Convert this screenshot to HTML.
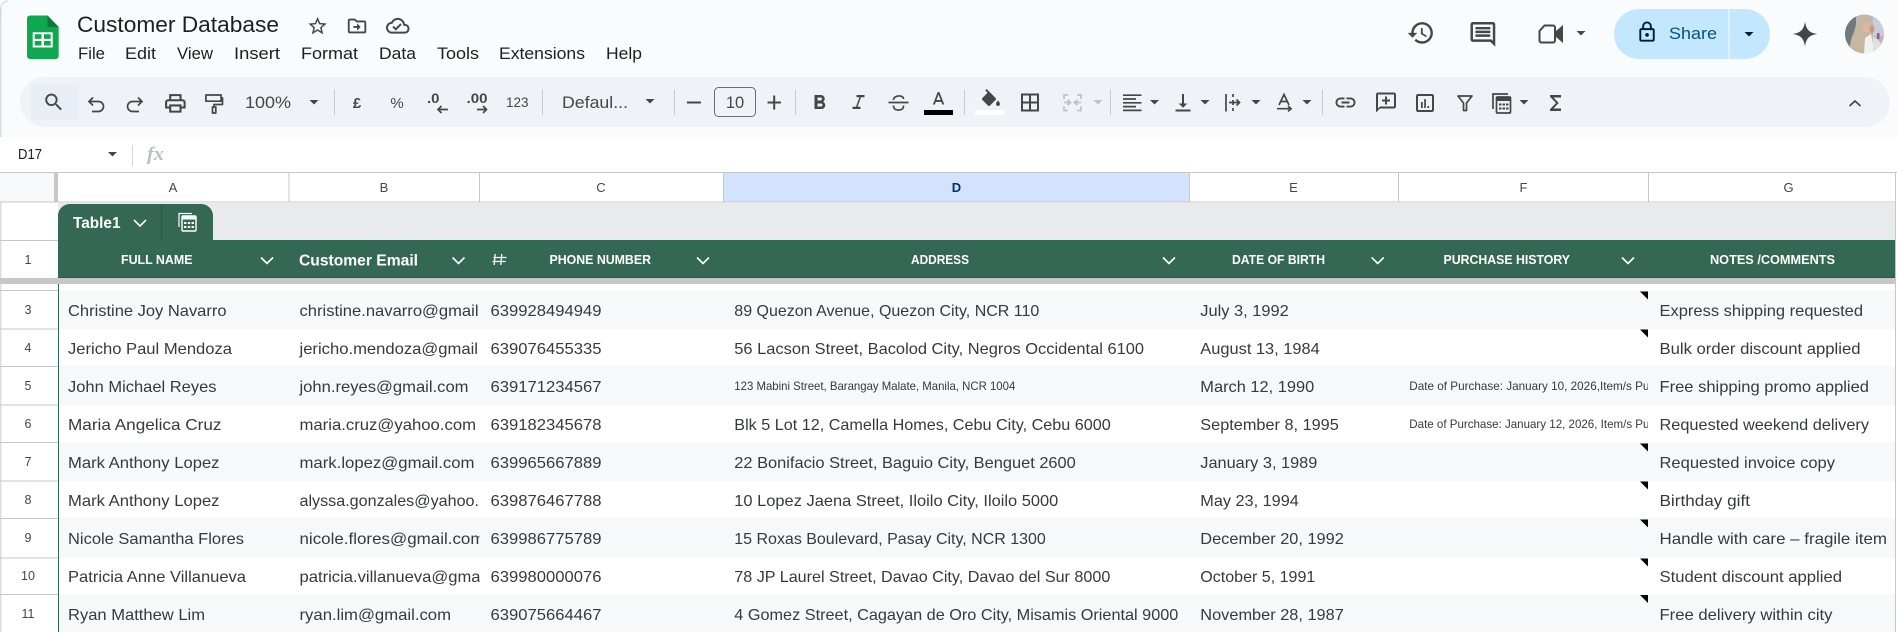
<!DOCTYPE html>
<html><head><meta charset="utf-8"><title>Customer Database</title>
<style>
html,body{margin:0;padding:0;background:#fff;width:1897px;height:632px;overflow:hidden}
svg{display:block}
text{font-family:"Liberation Sans",sans-serif;white-space:pre}
.c{font-size:16px;fill:#37393c}
.s{font-size:12px;fill:#37393c}
.r{font-size:12.5px;fill:#444746;text-anchor:middle}
.h{font-size:13px;fill:#444746;text-anchor:middle}
.w{font-size:12.5px;font-weight:bold;fill:#fff}
.m{font-size:17px;fill:#1f1f1f}
.t{fill:#444746}
.i{fill:#444746}
.l{fill:none;stroke:#444746;stroke-width:1.700}
.ch{fill:none;stroke:#fff;stroke-width:1.600}
</style></head><body>
<svg xmlns="http://www.w3.org/2000/svg" width="1897" height="632" viewBox="0 0 1897 632">
<defs>
<clipPath id="cb"><rect x="289" y="284" width="190.500" height="348"/></clipPath>
<clipPath id="cf"><rect x="1399" y="284" width="249" height="348"/></clipPath>
<clipPath id="av"><circle cx="1864.500" cy="34" r="19.500"/></clipPath>
<path id="dd" d="M-4.500-2h9L0 2.500z"/>
</defs>

<!-- chrome -->
<rect width="1897" height="137" fill="#f9fbfd"/>
<path d="M.7 20V9A8 8 0 0 1 8 1" fill="none" stroke="#d9d9d9" stroke-width="1.200"/>
<rect x=".2" y="9" width="1.200" height="623" fill="#d5d5d5"/>
<rect x="0" y="137" width="1897" height="35" fill="#fff"/>
<rect x="20" y="77" width="1870" height="50" rx="25" fill="#eff3f8"/>
<rect x="31" y="85" width="47" height="35" fill="#e8edf6"/>

<!-- logo -->
<path d="M30 15.500H47.500L58.700 27V56A3 3 0 0 1 55.700 59H30A3 3 0 0 1 27 56V18.500A3 3 0 0 1 30 15.500z" fill="#0fa750"/>
<path d="M47.500 15.500L58.700 27H47.500z" fill="#0a7a3a"/>
<rect x="32.700" y="32.300" width="20" height="15.200" fill="#fff"/>
<path d="M34.700 34.300h6.800v4.600h-6.800zM43.900 34.300h6.800v4.600h-6.800zM34.700 41h6.800v4.500h-6.800zM43.900 41h6.800v4.500h-6.800z" fill="#0fa750"/>

<text x="77" y="32" font-size="22" fill="#1f1f1f" textLength="202" lengthAdjust="spacingAndGlyphs">Customer Database</text>
<g transform="translate(306.500 15) scale(.92)"><path class="i" d="M22 9.240l-7.190-.62L12 2 9.190 8.630 2 9.240l5.460 4.730L5.820 21 12 17.270 18.180 21l-1.630-7.030L22 9.240zM12 15.400l-3.760 2.270 1-4.280-3.320-2.880 4.380-.38L12 6.100l1.710 4.040 4.380.38-3.320 2.880 1 4.280L12 15.400z"/></g>
<g transform="translate(346 15) scale(.92)"><path class="i" d="M20 6h-8l-2-2H4c-1.100 0-2 .9-2 2v12c0 1.100.9 2 2 2h16c1.100 0 2-.9 2-2V8c0-1.100-.9-2-2-2zm0 12H4V6h5.170l2 2H20v10zm-8-1l4-4-4-4v3H8v2h4v3z"/></g>
<g transform="translate(386 14) scale(.98)"><path class="i" d="M19.350 10.040C18.670 6.590 15.640 4 12 4 9.110 4 6.600 5.640 5.350 8.040 2.340 8.360 0 10.910 0 14c0 3.310 2.690 6 6 6h13c2.760 0 5-2.240 5-5 0-2.640-2.050-4.780-4.650-4.960zM19 18H6c-2.210 0-4-1.790-4-4 0-2.050 1.530-3.760 3.560-3.970l1.070-.11.5-.95C8.080 7.140 9.940 6 12 6c2.620 0 4.880 1.860 5.390 4.430l.3 1.500 1.530.11c1.560.1 2.780 1.410 2.780 2.960 0 1.650-1.350 3-3 3zM10 14.180l-2.090-2.090L6.500 13.500 10 17l6.010-6.010-1.410-1.410z"/></g>

<text class="m" x="78" y="59" textLength="27" lengthAdjust="spacingAndGlyphs">File</text>
<text class="m" x="125" y="59" textLength="31" lengthAdjust="spacingAndGlyphs">Edit</text>
<text class="m" x="177" y="59" textLength="36" lengthAdjust="spacingAndGlyphs">View</text>
<text class="m" x="234" y="59" textLength="46" lengthAdjust="spacingAndGlyphs">Insert</text>
<text class="m" x="301" y="59" textLength="57" lengthAdjust="spacingAndGlyphs">Format</text>
<text class="m" x="379" y="59" textLength="37" lengthAdjust="spacingAndGlyphs">Data</text>
<text class="m" x="437" y="59" textLength="42" lengthAdjust="spacingAndGlyphs">Tools</text>
<text class="m" x="499" y="59" textLength="86" lengthAdjust="spacingAndGlyphs">Extensions</text>
<text class="m" x="606" y="59" textLength="36" lengthAdjust="spacingAndGlyphs">Help</text>

<!-- top right -->
<g transform="translate(1406.500 18.500) scale(1.200)"><path class="i" d="M13 3c-4.970 0-9 4.030-9 9H1l3.890 3.890.07.14L9 12H6c0-3.870 3.130-7 7-7s7 3.130 7 7-3.130 7-7 7c-1.930 0-3.680-.79-4.940-2.060l-1.420 1.420C8.270 19.990 10.510 21 13 21c4.970 0 9-4.030 9-9s-4.030-9-9-9zm-1 5v5l4.280 2.540.72-1.210-3.500-2.080V8H12z"/></g>
<g transform="translate(1468 19.500) scale(1.240)"><path class="i" d="M20 2H4c-1.100 0-2 .9-2 2v12c0 1.100.9 2 2 2h14l4 4V4c0-1.100-.9-2-2-2zm0 15.170L18.830 16H4V4h16v13.170zM6 12h12v2H6zm0-3h12v2H6zm0-3h12v2H6z"/></g>
<path d="M1544.500 25.500h8.500a2 2 0 0 1 2 2v13a2 2 0 0 1-2 2h-11.500a2 2 0 0 1-2-2v-9.500z" fill="none" stroke="#444746" stroke-width="2"/>
<path d="M1556 31l7-6v18l-7-6z" fill="#444746"/>
<use href="#dd" x="1581" y="33" fill="#444746"/>
<path d="M1639 9h89.500v50H1639a25 25 0 0 1 0-50z" fill="#c2e7ff"/>
<path d="M1729.500 9h15.500a25 25 0 0 1 0 50h-15.500z" fill="#c2e7ff"/>
<g transform="translate(1635.500 20.500) scale(.96)"><path fill="#001d35" d="M18 8h-1V6c0-2.760-2.240-5-5-5S7 3.240 7 6v2H6c-1.100 0-2 .9-2 2v10c0 1.100.9 2 2 2h12c1.100 0 2-.9 2-2V10c0-1.100-.9-2-2-2zM9 6c0-1.660 1.340-3 3-3s3 1.340 3 3v2H9V6zm9 14H6V10h12v10zm-6-3c1.100 0 2-.9 2-2s-.9-2-2-2-2 .9-2 2 .9 2 2 2z"/></g>
<text x="1669" y="39" font-size="16.500" fill="#0b4f7f" textLength="48" lengthAdjust="spacingAndGlyphs">Share</text>
<use href="#dd" x="1749" y="34" fill="#001d35"/>
<g transform="translate(1790 19) scale(1.250)"><path class="i" d="M12 2C12.900 8.500 15.500 11.100 22 12 15.500 12.900 12.900 15.500 12 22 11.100 15.500 8.500 12.900 2 12 8.500 11.100 11.100 8.500 12 2z"/></g>
<g clip-path="url(#av)">
<rect x="1845" y="14" width="40" height="40" fill="#b4babf"/>
<rect x="1845" y="14" width="11" height="40" fill="#6f7a7c"/>
<rect x="1873" y="14" width="12" height="22" fill="#c9ced6"/>
<path d="M1858 17Q1866 13 1871 18L1873 28 1871 34 1871 54 1849 54Q1850 40 1854 32Z" fill="#c8b6a4"/>
<ellipse cx="1867" cy="27" rx="4.500" ry="5.500" fill="#dcb8a3"/>
<ellipse cx="1872" cy="29" rx="2.500" ry="4" fill="#c59c88"/>
<path d="M1865 38L1871 34 1875 54 1864 54z" fill="#f0f1ef"/>
<path d="M1873 36L1880 42 1884 54 1873 54z" fill="#dfe3d6"/>
<rect x="1877" y="33" width="2.500" height="6" fill="#a84bb0"/>
</g>

<!-- toolbar -->
<g transform="translate(42.400 90.800) scale(.95)"><path class="i" d="M15.500 14h-.79l-.28-.27C15.410 12.590 16 11.110 16 9.500 16 5.910 13.090 3 9.500 3S3 5.910 3 9.500 5.910 16 9.500 16c1.610 0 3.090-.59 4.230-1.570l.27.28v.79l5 4.990L20.490 19l-4.990-5zm-6 0C7.010 14 5 11.990 5 9.500S7.010 5 9.500 5 14 7.010 14 9.500 11.990 14 9.500 14z"/></g>
<path class="l" d="M93 97.500L89 101.500 93 105.500M89.500 101.500H98.500a5 5 0 0 1 0 10H92"/>
<path class="l" d="M138 97.500L142 101.500 138 105.500M141.500 101.500H132.500a5 5 0 0 0 0 10H139"/>
<g transform="translate(163 91) scale(1.030)"><path class="i" d="M19 8h-1V3H6v5H5c-1.660 0-3 1.340-3 3v6h4v4h12v-4h4v-6c0-1.660-1.340-3-3-3zM8 5h8v3H8V5zm8 12v2H8v-4h8v2zm2-2v-2H6v2H4v-4c0-.55.45-1 1-1h14c.55 0 1 .45 1 1v4h-2z"/></g>
<path class="l" d="M205.900 95h15.200v6.200h-15.200zM221 98h1.500v6.500H214V107M212.500 107h3.300v6h-3.300z" stroke-linejoin="round"/>
<text x="245" y="108" font-size="17" class="t" textLength="46" lengthAdjust="spacingAndGlyphs">100%</text>
<use href="#dd" x="314" y="102" class="i"/>
<rect x="334" y="90" width="1" height="25" fill="#c7c9cc"/>
<text x="357" y="108" font-size="15" font-weight="bold" class="t" text-anchor="middle">£</text>
<text x="397" y="108" font-size="15" class="t" text-anchor="middle">%</text>
<text x="427" y="103" font-size="14" font-weight="bold" class="t" textLength="12.500" lengthAdjust="spacingAndGlyphs">.0</text>
<path class="l" stroke-width="1.500" d="M448 109.500H438M441.500 106L438 109.500l3.500 3.500"/>
<text x="466.500" y="103" font-size="14" font-weight="bold" class="t" textLength="21" lengthAdjust="spacingAndGlyphs">.00</text>
<path class="l" stroke-width="1.500" d="M477 109.500H486.500M483 106l3.500 3.500-3.500 3.500"/>
<text x="506" y="107" font-size="14" class="t" textLength="22.500" lengthAdjust="spacingAndGlyphs">123</text>
<rect x="542" y="90" width="1" height="25" fill="#c7c9cc"/>
<text x="562" y="108" font-size="16.500" class="t" textLength="66" lengthAdjust="spacingAndGlyphs">Defaul...</text>
<use href="#dd" x="650" y="101" class="i"/>
<rect x="674" y="90" width="1" height="25" fill="#c7c9cc"/>
<rect x="687" y="101.500" width="14" height="2" fill="#444746"/>
<rect x="714.500" y="87.500" width="41" height="29" rx="4" fill="none" stroke="#6b6f72" stroke-width="1"/>
<text x="735" y="108" font-size="16.500" class="t" text-anchor="middle">10</text>
<path d="M767.500 101.500h5.700v-6h2v6h5.800v2H775.200v6h-2v-6h-5.700z" class="i"/>
<rect x="795" y="90" width="1" height="25" fill="#c7c9cc"/>
<g transform="translate(807.500 91)"><path class="i" d="M15.600 10.790c.97-.67 1.650-1.770 1.650-2.790 0-2.260-1.750-4-4-4H7v14h7.040c2.090 0 3.710-1.700 3.710-3.790 0-1.520-.86-2.820-2.150-3.420zM10 6.500h3c.83 0 1.500.67 1.500 1.500s-.67 1.500-1.500 1.500h-3v-3zm3.500 9H10v-3h3.500c.83 0 1.500.67 1.500 1.500s-.67 1.500-1.500 1.500z"/></g>
<g transform="translate(846.500 91)"><path class="i" d="M10 4v2.200h2.900l-3.400 9.600H6V18h8v-2.200h-2.900l3.400-9.600H18V4z"/></g>
<path class="l" d="M888.500 102.500H908.500M893.500 100c0-5 10-5.500 10-1M893.500 105.500c0 1.500 0 4.500 5 4.500s5-3 5-4.500"/>
<g transform="translate(928 89.500) scale(.88)"><path class="i" d="M11 3L5.500 17h2.250l1.120-3h6.250l1.120 3h2.250L13 3h-2zm-1.380 9L12 5.670 14.380 12H9.620z"/></g>
<rect x="924" y="110" width="29" height="5" fill="#000"/>
<rect x="964" y="90" width="1" height="25" fill="#c7c9cc"/>
<g transform="translate(979 89)"><path class="i" d="M16.560 8.940L7.620 0 6.210 1.410l2.380 2.380-5.150 5.150c-.59.59-.59 1.540 0 2.120l5.500 5.500c.29.29.68.44 1.060.44s.77-.15 1.060-.44l5.500-5.500c.59-.58.59-1.530 0-2.120zM19 11.500s-2 2.170-2 3.500c0 1.100.9 2 2 2s2-.9 2-2c0-1.330-2-3.500-2-3.500z"/></g>
<rect x="975" y="110" width="29" height="5" fill="#fff"/>
<g transform="translate(1018 90.500)"><path class="i" d="M3 3v18h18V3H3zm8 16H5v-6h6v6zm0-8H5V5h6v6zm8 8h-6v-6h6v6zm0-8h-6V5h6v6z"/></g>
<path d="M1068 95h-4v4M1077 95h4v4M1068 110.500h-4v-4M1077 110.500h4v-4M1064 102.500h6.500M1067.500 100l3 2.500-3 2.500M1081 102.500h-6.500M1077.500 100l-3 2.500 3 2.500" fill="none" stroke="#bfc3c7" stroke-width="1.800"/>
<use href="#dd" x="1098" y="102" fill="#bfc3c7"/>
<rect x="1110" y="90" width="1" height="25" fill="#c7c9cc"/>
<path class="l" stroke-width="1.800" d="M1123 95.200H1141.500M1123 99H1136M1123 102.800H1141.500M1123 106.600H1136M1123 110.400H1141.500"/>
<use href="#dd" x="1154.500" y="102" class="i"/>
<path class="i" d="M1175.500 109.500h15v2h-15zM1182 94h2v9.500h3.300l-4.300 4.300-4.300-4.300h3.300z"/>
<use href="#dd" x="1205" y="102" class="i"/>
<path class="l" d="M1226 94v17.500M1233 94v3M1233 100v5M1233 108v3M1229 102.500h10.500M1236.500 99.500l3 3-3 3"/>
<use href="#dd" x="1256" y="102" class="i"/>
<path class="l" stroke-width="1.400" d="M1279 105L1284 94.500 1289 105M1280.500 101.500H1287.500M1277 108.700H1291M1288 106l3 2.700-3 2.700"/>
<use href="#dd" x="1307" y="102" class="i"/>
<rect x="1322" y="90" width="1" height="25" fill="#c7c9cc"/>
<g transform="translate(1333.500 90.500)"><path class="i" d="M3.900 12c0-1.710 1.390-3.100 3.100-3.100h4V7H7c-2.760 0-5 2.240-5 5s2.240 5 5 5h4v-1.900H7c-1.710 0-3.100-1.390-3.100-3.100zM8 13h8v-2H8v2zm9-6h-4v1.900h4c1.710 0 3.100 1.390 3.100 3.100s-1.390 3.100-3.100 3.100h-4V17h4c2.760 0 5-2.240 5-5s-2.240-5-5-5z"/></g>
<g transform="translate(1374 90.500)"><path class="i" d="M20 2H4c-1.100 0-2 .9-2 2v18l4-4h14c1.100 0 2-.9 2-2V4c0-1.100-.9-2-2-2zm0 14H6l-2 2V4h16v12zM11 6h2v3h3v2h-3v3h-2v-3H8V9h3z"/></g>
<g transform="translate(1413 91)"><path class="i" d="M19 3H5c-1.100 0-2 .9-2 2v14c0 1.100.9 2 2 2h14c1.100 0 2-.9 2-2V5c0-1.100-.9-2-2-2zm0 16H5V5h14v14zM8 11h1.700v6H8zm3.200-3h1.700v9h-1.700zm3.200 7h1.700v2h-1.700z"/></g>
<path class="l" stroke-width="2" d="M1458 96H1472L1466.500 103V110.500H1463.500V103z" stroke-linejoin="round"/>
<path class="l" d="M1493 109V94H1508" stroke-width="1.500"/>
<rect x="1496.500" y="97" width="14" height="16" rx="1" fill="none" stroke="#444746" stroke-width="1.700"/>
<path class="i" d="M1496.500 97h14v4h-14zM1499 103.500h2.500v2h-2.500zM1502.500 103.500h2.500v2h-2.500zM1506 103.500h2.500v2h-2.500zM1499 107.500h2.500v2h-2.500zM1502.500 107.500h2.500v2h-2.500zM1506 107.500h2.500v2h-2.500z"/>
<use href="#dd" x="1524" y="102" class="i"/>
<path class="i" d="M1550 95h11v2.500h-7.500l5.200 5.500-5.200 5.500h7.500v2.500h-11v-1.800l6-6.200-6-6.200z"/>
<path class="l" stroke-width="1.900" d="M1849.500 106l5.500-5 5.500 5"/>

<!-- formula bar -->
<text x="18" y="159" font-size="14.500" fill="#1f1f1f" textLength="24" lengthAdjust="spacingAndGlyphs">D17</text>
<use href="#dd" x="112.500" y="154" class="i"/>
<rect x="132" y="145" width="1" height="21" fill="#d5d7da"/>
<text x="147" y="160" font-size="19" font-style="italic" font-weight="bold" fill="#bcbfc2" style="font-family:'Liberation Serif',serif" textLength="17" lengthAdjust="spacingAndGlyphs">fx</text>

<!-- headers -->
<rect x="0" y="172" width="54" height="30" fill="#f8f9fa"/>
<rect x="724" y="173" width="465" height="29" fill="#d3e3fd"/>
<rect x="0" y="172" width="1897" height="1" fill="#c7c7c7"/>
<rect x="0" y="201.500" width="1896" height="1" fill="#c7c7c7"/>
<rect x="54" y="172" width="4" height="30" fill="#c7c7c7"/>
<g fill="#c7c7c7">
<rect x="288.500" y="172" width="1" height="30"/><rect x="479" y="172" width="1" height="30"/><rect x="723" y="172" width="1" height="30"/><rect x="1189" y="172" width="1" height="30"/><rect x="1398" y="172" width="1" height="30"/><rect x="1648" y="172" width="1" height="30"/><rect x="1895" y="172" width="1" height="460"/>
</g>
<text class="h" x="173" y="192">A</text><text class="h" x="384" y="192">B</text><text class="h" x="601" y="192">C</text><text class="h" x="956.500" y="192" style="fill:#062e6f;font-weight:bold">D</text><text class="h" x="1293.500" y="192">E</text><text class="h" x="1523.500" y="192">F</text><text class="h" x="1788.500" y="192">G</text>

<!-- table band -->
<rect x="58" y="203" width="1837" height="37" fill="#e8eaed"/>
<path d="M58 240V215a12 12 0 0 1 12-11H201a12 12 0 0 1 12 11V240z" fill="#356854"/>
<rect x="161" y="204" width="1" height="36" fill="#2a5a45"/>
<text x="73" y="228" font-size="16" font-weight="bold" fill="#fff" textLength="47.500" lengthAdjust="spacingAndGlyphs">Table1</text>
<path class="ch" d="M134 220l6 6 6-6"/>
<path d="M179 227V213.500H192" fill="none" stroke="#fff" stroke-width="1.200"/>
<rect x="182" y="216" width="14" height="15" rx="1" fill="none" stroke="#fff" stroke-width="1.400"/>
<path d="M182 216h14v3.500h-14zM184 222h2.400v2h-2.400zM187.800 222h2.400v2h-2.400zM191.600 222h2.400v2h-2.400zM184 226h2.400v2h-2.400zM187.800 226h2.400v2h-2.400zM191.600 226h2.400v2h-2.400z" fill="#fff"/>

<!-- table header -->
<rect x="58" y="240" width="1837" height="38" fill="#356854"/>
<rect x="58" y="277" width="1837" height="1" fill="#28563f"/>
<text class="w" x="121" y="264" textLength="71.500" lengthAdjust="spacingAndGlyphs">FULL NAME</text>
<path class="ch" d="M261 257.500l6 6 6-6"/>
<text x="299" y="265.500" font-size="16" font-weight="bold" fill="#fff" textLength="119" lengthAdjust="spacingAndGlyphs">Customer Email</text>
<path class="ch" d="M452.500 257.500l6 6 6-6"/>
<path d="M495.200 254l-1 11M501.800 254l-1 11M493.300 257.500H506.500M492.500 261.500H505.700" fill="none" stroke="#fff" stroke-width="1.300"/>
<text class="w" x="549.500" y="264" textLength="101.500" lengthAdjust="spacingAndGlyphs">PHONE NUMBER</text>
<path class="ch" d="M697 257.500l6 6 6-6"/>
<text class="w" x="911" y="264" textLength="58" lengthAdjust="spacingAndGlyphs">ADDRESS</text>
<path class="ch" d="M1163 257.500l6 6 6-6"/>
<text class="w" x="1232" y="264" textLength="93" lengthAdjust="spacingAndGlyphs">DATE OF BIRTH</text>
<path class="ch" d="M1371.700 257.500l6 6 6-6"/>
<text class="w" x="1443.500" y="264" textLength="126.500" lengthAdjust="spacingAndGlyphs">PURCHASE HISTORY</text>
<path class="ch" d="M1622 257.500l6 6 6-6"/>
<text class="w" x="1710" y="264" textLength="125" lengthAdjust="spacingAndGlyphs">NOTES /COMMENTS</text>

<!-- freeze -->
<rect x="0" y="278" width="1896" height="6" fill="#c7c7c7"/>
<rect x="0" y="290" width="58" height="1" fill="#c7c7c7"/>

<!-- stripes -->
<g fill="#f6f8f9">
<rect x="59" y="290" width="1836" height="39"/><rect x="59" y="366" width="1836" height="39"/><rect x="59" y="442" width="1836" height="39"/><rect x="59" y="518" width="1836" height="40"/><rect x="59" y="594" width="1836" height="38"/>
</g>
<rect x="58" y="284" width="1" height="348" fill="#356854"/>

<!-- row header -->
<rect x="0" y="240" width="58" height="1" fill="#c7c7c7"/>
<g fill="#c7c7c7">
<rect x="0" y="328.500" width="58" height="1"/><rect x="0" y="366" width="58" height="1"/><rect x="0" y="404.500" width="58" height="1"/><rect x="0" y="442" width="58" height="1"/><rect x="0" y="480.500" width="58" height="1"/><rect x="0" y="518" width="58" height="1"/><rect x="0" y="557.500" width="58" height="1"/><rect x="0" y="594" width="58" height="1"/>
</g>
<text class="r" x="28" y="264">1</text><text class="r" x="28" y="314">3</text><text class="r" x="28" y="352">4</text><text class="r" x="28" y="390">5</text><text class="r" x="28" y="428">6</text><text class="r" x="28" y="466">7</text><text class="r" x="28" y="504">8</text><text class="r" x="28" y="542">9</text><text class="r" x="28" y="580">10</text><text class="r" x="28" y="618">11</text>

<!-- column A -->
<text class="c" x="68" y="316" textLength="158.500" lengthAdjust="spacingAndGlyphs">Christine Joy Navarro</text>
<text class="c" x="68" y="354" textLength="164" lengthAdjust="spacingAndGlyphs">Jericho Paul Mendoza</text>
<text class="c" x="68" y="392" textLength="148.500" lengthAdjust="spacingAndGlyphs">John Michael Reyes</text>
<text class="c" x="68" y="430" textLength="153.500" lengthAdjust="spacingAndGlyphs">Maria Angelica Cruz</text>
<text class="c" x="68" y="468" textLength="151.500" lengthAdjust="spacingAndGlyphs">Mark Anthony Lopez</text>
<text class="c" x="68" y="506" textLength="151.500" lengthAdjust="spacingAndGlyphs">Mark Anthony Lopez</text>
<text class="c" x="68" y="544" textLength="176" lengthAdjust="spacingAndGlyphs">Nicole Samantha Flores</text>
<text class="c" x="68" y="582" textLength="178" lengthAdjust="spacingAndGlyphs">Patricia Anne Villanueva</text>
<text class="c" x="68" y="620" textLength="137" lengthAdjust="spacingAndGlyphs">Ryan Matthew Lim</text>

<!-- column B -->
<g clip-path="url(#cb)">
<text class="c" x="299.500" y="316" textLength="179" lengthAdjust="spacingAndGlyphs">christine.navarro@gmail</text>
<text class="c" x="299.500" y="354" textLength="178.500" lengthAdjust="spacingAndGlyphs">jericho.mendoza@gmail</text>
<text class="c" x="299.500" y="392" textLength="169" lengthAdjust="spacingAndGlyphs">john.reyes@gmail.com</text>
<text class="c" x="299.500" y="430" textLength="176.500" lengthAdjust="spacingAndGlyphs">maria.cruz@yahoo.com</text>
<text class="c" x="299.500" y="468" textLength="175" lengthAdjust="spacingAndGlyphs">mark.lopez@gmail.com</text>
<text class="c" x="299.500" y="506" textLength="179.500" lengthAdjust="spacingAndGlyphs">alyssa.gonzales@yahoo.</text>
<text class="c" x="299.500" y="544" textLength="185" lengthAdjust="spacingAndGlyphs">nicole.flores@gmail.com</text>
<text class="c" x="299.500" y="582" textLength="181" lengthAdjust="spacingAndGlyphs">patricia.villanueva@gma</text>
<text class="c" x="299.500" y="620" textLength="151.500" lengthAdjust="spacingAndGlyphs">ryan.lim@gmail.com</text>
</g>

<!-- column C -->
<text class="c" x="490.500" y="316" textLength="111" lengthAdjust="spacingAndGlyphs">639928494949</text>
<text class="c" x="490.500" y="354" textLength="111" lengthAdjust="spacingAndGlyphs">639076455335</text>
<text class="c" x="490.500" y="392" textLength="111" lengthAdjust="spacingAndGlyphs">639171234567</text>
<text class="c" x="490.500" y="430" textLength="111" lengthAdjust="spacingAndGlyphs">639182345678</text>
<text class="c" x="490.500" y="468" textLength="111" lengthAdjust="spacingAndGlyphs">639965667889</text>
<text class="c" x="490.500" y="506" textLength="111" lengthAdjust="spacingAndGlyphs">639876467788</text>
<text class="c" x="490.500" y="544" textLength="111" lengthAdjust="spacingAndGlyphs">639986775789</text>
<text class="c" x="490.500" y="582" textLength="111" lengthAdjust="spacingAndGlyphs">639980000076</text>
<text class="c" x="490.500" y="620" textLength="111" lengthAdjust="spacingAndGlyphs">639075664467</text>

<!-- column D -->
<text class="c" x="734.300" y="316" textLength="305" lengthAdjust="spacingAndGlyphs">89 Quezon Avenue, Quezon City, NCR 110</text>
<text class="c" x="734.300" y="354" textLength="409.700" lengthAdjust="spacingAndGlyphs">56 Lacson Street, Bacolod City, Negros Occidental 6100</text>
<text class="s" x="734.300" y="390" textLength="281" lengthAdjust="spacingAndGlyphs">123 Mabini Street, Barangay Malate, Manila, NCR 1004</text>
<text class="c" x="734.300" y="430" textLength="376.500" lengthAdjust="spacingAndGlyphs">Blk 5 Lot 12, Camella Homes, Cebu City, Cebu 6000</text>
<text class="c" x="734.300" y="468" textLength="341.500" lengthAdjust="spacingAndGlyphs">22 Bonifacio Street, Baguio City, Benguet 2600</text>
<text class="c" x="734.300" y="506" textLength="324" lengthAdjust="spacingAndGlyphs">10 Lopez Jaena Street, Iloilo City, Iloilo 5000</text>
<text class="c" x="734.300" y="544" textLength="311.500" lengthAdjust="spacingAndGlyphs">15 Roxas Boulevard, Pasay City, NCR 1300</text>
<text class="c" x="734.300" y="582" textLength="376" lengthAdjust="spacingAndGlyphs">78 JP Laurel Street, Davao City, Davao del Sur 8000</text>
<text class="c" x="734.300" y="620" textLength="444" lengthAdjust="spacingAndGlyphs">4 Gomez Street, Cagayan de Oro City, Misamis Oriental 9000</text>

<!-- column E -->
<text class="c" x="1200.300" y="316" textLength="88.500" lengthAdjust="spacingAndGlyphs">July 3, 1992</text>
<text class="c" x="1200.300" y="354" textLength="119.500" lengthAdjust="spacingAndGlyphs">August 13, 1984</text>
<text class="c" x="1200.300" y="392" textLength="114" lengthAdjust="spacingAndGlyphs">March 12, 1990</text>
<text class="c" x="1200.300" y="430" textLength="138.500" lengthAdjust="spacingAndGlyphs">September 8, 1995</text>
<text class="c" x="1200.300" y="468" textLength="117" lengthAdjust="spacingAndGlyphs">January 3, 1989</text>
<text class="c" x="1200.300" y="506" textLength="98.500" lengthAdjust="spacingAndGlyphs">May 23, 1994</text>
<text class="c" x="1200.300" y="544" textLength="143.500" lengthAdjust="spacingAndGlyphs">December 20, 1992</text>
<text class="c" x="1200.300" y="582" textLength="115" lengthAdjust="spacingAndGlyphs">October 5, 1991</text>
<text class="c" x="1200.300" y="620" textLength="143.500" lengthAdjust="spacingAndGlyphs">November 28, 1987</text>

<!-- column F -->
<g clip-path="url(#cf)">
<text class="s" x="1409.300" y="390" textLength="244" lengthAdjust="spacingAndGlyphs">Date of Purchase: January 10, 2026,Item/s Pur</text>
<text class="s" x="1409.300" y="428" textLength="244" lengthAdjust="spacingAndGlyphs">Date of Purchase: January 12, 2026, Item/s Pur</text>
</g>
<g fill="#000">
<path d="M1640 291.500h8v8z"/><path d="M1640 329.500h8v8z"/><path d="M1640 443.500h8v8z"/><path d="M1640 481.500h8v8z"/><path d="M1640 519.500h8v8z"/><path d="M1640 558.500h8v8z"/><path d="M1640 595h8v8z"/>
</g>

<!-- column G -->
<text class="c" x="1659.500" y="316" textLength="203.500" lengthAdjust="spacingAndGlyphs">Express shipping requested</text>
<text class="c" x="1659.500" y="354" textLength="201" lengthAdjust="spacingAndGlyphs">Bulk order discount applied</text>
<text class="c" x="1659.500" y="392" textLength="209.500" lengthAdjust="spacingAndGlyphs">Free shipping promo applied</text>
<text class="c" x="1659.500" y="430" textLength="209.500" lengthAdjust="spacingAndGlyphs">Requested weekend delivery</text>
<text class="c" x="1659.500" y="468" textLength="175.500" lengthAdjust="spacingAndGlyphs">Requested invoice copy</text>
<text class="c" x="1659.500" y="506" textLength="90.500" lengthAdjust="spacingAndGlyphs">Birthday gift</text>
<text class="c" x="1659.500" y="544" textLength="227.500" lengthAdjust="spacingAndGlyphs">Handle with care – fragile item</text>
<text class="c" x="1659.500" y="582" textLength="182.500" lengthAdjust="spacingAndGlyphs">Student discount applied</text>
<text class="c" x="1659.500" y="620" textLength="173" lengthAdjust="spacingAndGlyphs">Free delivery within city</text>
</svg>
</body></html>
